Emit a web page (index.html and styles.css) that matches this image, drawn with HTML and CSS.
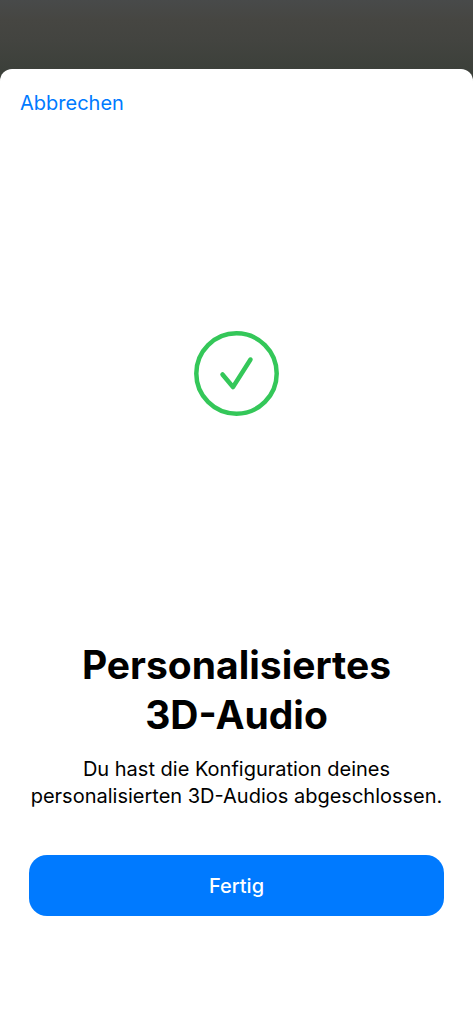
FILE: index.html
```html
<!DOCTYPE html>
<html lang="de">
<head>
    <meta charset="UTF-8">
    <meta name="viewport" content="width=device-width, initial-scale=1.0">
    <title>Personalisiertes 3D-Audio</title>
    <link rel="stylesheet" href="styles.css">
</head>
<body>
    <main class="sheet">
        <header class="sheet-header">
            <button class="cancel" type="button">Abbrechen</button>
        </header>

        <div class="status">
            <svg class="check" viewBox="0 0 85 85" aria-hidden="true">
                <circle cx="42.5" cy="42.5" r="40.2"/>
                <path d="M28.500 43.500 L39 56 L56.500 28.500"/>
            </svg>
        </div>

        <section class="content">
            <h1>Personalisiertes<br>3D-Audio</h1>
            <p>Du hast die Konfiguration deines personalisierten 3D-Audios abgeschlossen.</p>
            <button class="done" type="button">Fertig</button>
        </section>
    </main>
</body>
</html>
```

FILE: styles.css
```css
* {
    box-sizing: border-box;
}
body {
    margin: 0;
    min-height: 100vh;
    padding-top: 69px;
    display: flex;
    flex-direction: column;
    background: linear-gradient(#484a4a, #464642 20px, #434440 40px, #3c403a 70px);
    font-family: Inter, sans-serif;
    color: #000;
}
button {
    border: 0;
    font-family: inherit;
    cursor: pointer;
}

.sheet {
    flex: 1;
    display: flex;
    flex-direction: column;
    background: #fff;
    border-radius: 12px 12px 0 0;
}
.sheet-header {
    padding: 20px;
}
.cancel {
    display: block;
    padding: 0;
    background: none;
    color: #007aff;
    font-size: 20px;
    line-height: 28px;
}

/* Success mark */
.status {
    flex: 1;
    display: flex;
    align-items: center;
    justify-content: center;
    padding-bottom: 31px;
}
.check {
    width: 85px;
    height: 85px;
    fill: none;
    stroke: #34c759;
    stroke-width: 4.5;
    stroke-linecap: round;
    stroke-linejoin: round;
}

.content {
    padding: 0 29px 108px;
    text-align: center;
}
h1 {
    margin: 0 0 16px;
    font-size: 39px;
    line-height: 50px;
    font-weight: 700;
}
p {
    margin: 0 0 45px;
    font-size: 20px;
    line-height: 27px;
}
.done {
    width: 100%;
    height: 61px;
    border-radius: 18px;
    background: #007aff;
    color: #fff;
    font-size: 20px;
    font-weight: 500;
}
```
